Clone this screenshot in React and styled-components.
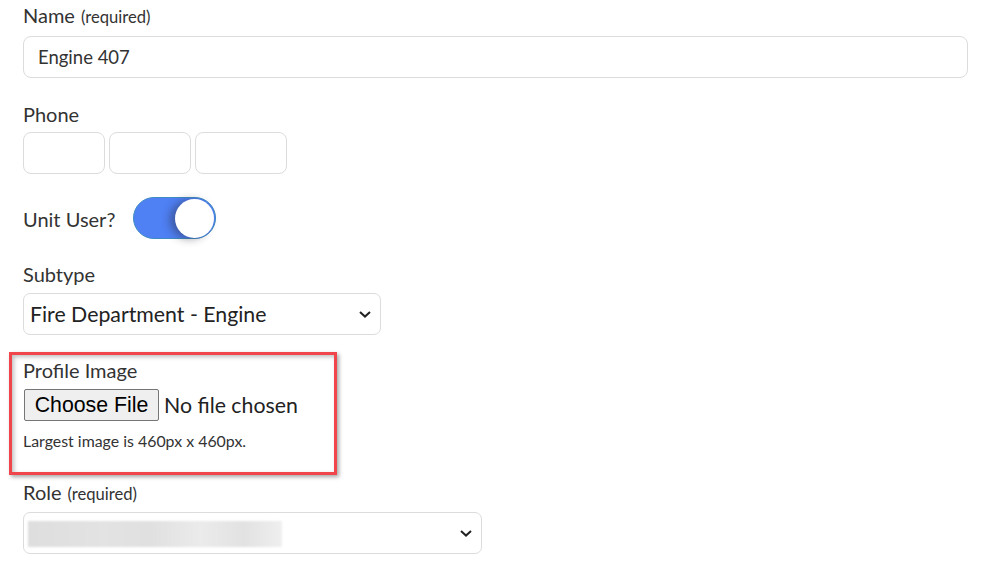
import React from "react";
import styled, { createGlobalStyle } from "styled-components";

const GlobalStyle = createGlobalStyle`
  body {
    margin: 0;
    background: #ffffff;
    font-family: Lato, "Open Sans", sans-serif;
    color: #333333;
  }
`;

const Page = styled.form`
  padding: 3px 0 0 23px;
  width: 945px;
`;

const Field = styled.div`
  position: relative;
  margin-bottom: ${(p) => p.$gap || 23}px;
`;

const Label = styled.label`
  display: block;
  font-size: 20px;
  line-height: 24px;
  margin-bottom: ${(p) => p.$gap || 7}px;
  color: #333;
`;

const Required = styled.span`
  font-size: 16.6px;
  margin-left: 6px;
`;

const TextInput = styled.input`
  box-sizing: border-box;
  width: ${(p) => p.$width || "100%"};
  height: 42px;
  border: 1px solid #dcdcdc;
  border-radius: 8px;
  padding: 0 14px;
  font-family: Lato, sans-serif;
  font-size: 18.5px;
  color: #333;
  background: #fff;
  outline: none;
`;

const PhoneRow = styled.div`
  display: flex;
  gap: 4px;
`;

const ToggleRow = styled.div`
  display: flex;
  align-items: center;
  gap: 18px;
  margin-bottom: 23px;
`;

const ToggleLabel = styled.span`
  font-size: 20px;
  line-height: 24px;
  padding-top: 2px;
`;

const Toggle = styled.div`
  box-sizing: border-box;
  position: relative;
  width: 83px;
  height: 42px;
  border-radius: 21px;
  background: #4f80f4;
  border: 1px solid #3f8cc4;
`;

const Knob = styled.div`
  position: absolute;
  top: 1px;
  right: 1px;
  width: 39px;
  height: 39px;
  border-radius: 50%;
  background: #fff;
  box-shadow: -5px 1px 9px rgba(40, 40, 60, 0.45);
`;

const SelectBox = styled.div`
  box-sizing: border-box;
  width: ${(p) => p.$width}px;
  height: 42px;
  border: 1px solid #dcdcdc;
  border-radius: 7px;
  display: flex;
  align-items: center;
  justify-content: space-between;
  padding: 0 9px 0 6px;
  font-size: 21.3px;
  color: #222;
  background: #fff;
`;

const Chevron = () => (
  <svg width="12" height="7" viewBox="0 0 12 7">
    <path d="M1 1l5 4.6L11 1" fill="none" stroke="#222" strokeWidth="2" />
  </svg>
);

const Blurred = styled.div`
  width: 254px;
  height: 26px;
  margin-left: -2px;
  margin-top: 2px;
  background: linear-gradient(
    90deg,
    #dedede 0%,
    #e3e3e3 30%,
    #e0e0e0 48%,
    #ebebeb 68%,
    #e2e2e2 85%,
    #efefef 100%
  );
  filter: blur(1px);
`;

const FileRow = styled.div`
  display: flex;
  align-items: center;
  gap: 5px;
  margin-bottom: 10px;
`;

const FileButton = styled.button`
  box-sizing: border-box;
  height: 32px;
  width: 135px;
  margin-left: 1px;
  padding: 0;
  font-family: "Liberation Sans", Arial, sans-serif;
  font-size: 21.3px;
  color: #000;
  background: #efefef;
  border: 1px solid #767676;
  border-radius: 2px;
`;

const FileText = styled.span`
  font-size: 21.3px;
  color: #222;
`;

const Hint = styled.p`
  margin: 0;
  font-size: 15.9px;
  line-height: 19px;
  color: #333;
`;

const Highlight = styled.div`
  position: absolute;
  top: -6px;
  left: -14px;
  width: 328px;
  height: 123px;
  box-sizing: border-box;
  border: 3px solid #f0454a;
  box-shadow: 2px 2px 4px rgba(0, 0, 0, 0.35),
    inset 2px 2px 4px rgba(0, 0, 0, 0.25);
  pointer-events: none;
`;

export default function App() {
  return (
    <>
      <GlobalStyle />
      <Page>
        <Field $gap={24}>
          <Label>
            Name<Required>(required)</Required>
          </Label>
          <TextInput defaultValue="Engine 407" />
        </Field>

        <Field>
          <Label $gap={6}>Phone</Label>
          <PhoneRow>
            <TextInput $width="82px" />
            <TextInput $width="82px" />
            <TextInput $width="92px" />
          </PhoneRow>
        </Field>

        <ToggleRow>
          <ToggleLabel>Unit User?</ToggleLabel>
          <Toggle>
            <Knob />
          </Toggle>
        </ToggleRow>

        <Field>
          <Label>Subtype</Label>
          <SelectBox $width={358}>
            <span>Fire Department - Engine</span>
            <Chevron />
          </SelectBox>
        </Field>

        <Field $gap={30}>
          <Highlight />
          <Label>Profile Image</Label>
          <FileRow>
            <FileButton type="button">Choose File</FileButton>
            <FileText>No file chosen</FileText>
          </FileRow>
          <Hint>Largest image is 460px x 460px.</Hint>
        </Field>

        <Field>
          <Label $gap={6}>
            Role<Required>(required)</Required>
          </Label>
          <SelectBox $width={459}>
            <Blurred />
            <Chevron />
          </SelectBox>
        </Field>
      </Page>
    </>
  );
}
